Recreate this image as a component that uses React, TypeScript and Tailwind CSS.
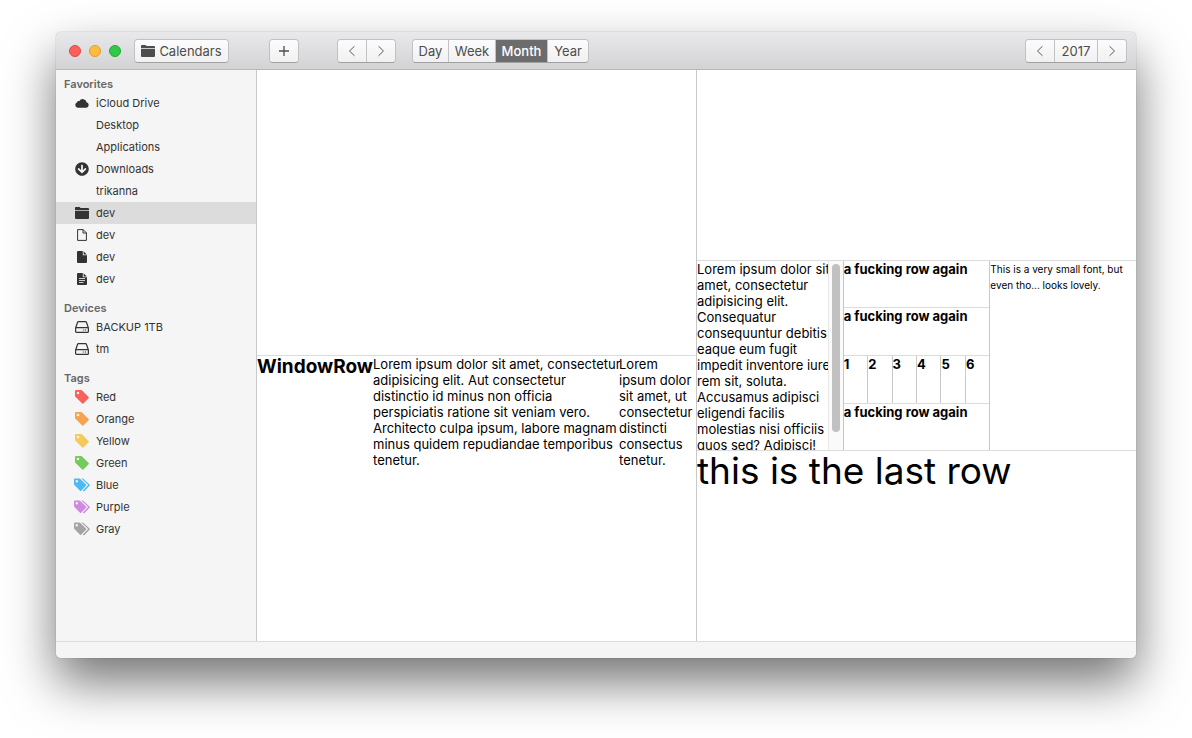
import type { ReactNode } from "react";
import { FaArrowCircleDown } from "react-icons/fa";

const chevron = "h-3 w-2 fill-none stroke-[#5a5a5a]";

function ChevronLeft() {
  return (
    <svg viewBox="0 0 8 12" className={chevron} aria-hidden="true">
      <path d="M6.5 1.2 1.5 6l5 4.800" />
    </svg>
  );
}

function ChevronRight() {
  return (
    <svg viewBox="0 0 8 12" className={chevron} aria-hidden="true">
      <path d="M1.500 1.200 6.500 6l-5 4.800" />
    </svg>
  );
}

function FolderIcon() {
  return (
    <svg viewBox="0 0 14 12" className="h-3 w-[14px] fill-current" aria-hidden="true">
      <path d="M0 3V.8Q0 0 .8 0h3.400q.4 0 .7.300l.7.700H13q1 0 1 1v1z" />
      <path d="M0 3.700h14V11q0 1-1 1H1q-1 0-1-1z" />
    </svg>
  );
}

function CloudIcon() {
  return (
    <svg viewBox="0 0 14 10" className="h-[10px] w-[14px] fill-current" aria-hidden="true">
      <path d="M11.600 4.300A3.900 3.900 0 0 0 4.400 3 2.100 2.100 0 0 0 1.800 4.600 2.700 2.700 0 0 0 2.700 9.700h8.500a2.750 2.750 0 0 0 .4-5.400z" />
    </svg>
  );
}

function FileOutlineIcon() {
  return (
    <svg viewBox="0 0 10 12" className="h-3 w-[10px] fill-none stroke-current" aria-hidden="true">
      <path d="M.6.600h5.600l3.200 3.200v7.600H.6zM6 .6V4h3.400" />
    </svg>
  );
}

function FileIcon({ lines = false }: { lines?: boolean }) {
  return (
    <svg viewBox="0 0 10 12" className="h-3 w-[10px]" aria-hidden="true">
      <path className="fill-current" d="M1 0h4.800v4.200H10V11q0 1-1 1H1q-1 0-1-1V1q0-1 1-1z" />
      <path className="fill-current" d="M6.600.2 9.800 3.400H6.600z" />
      {lines && <path className="fill-none stroke-[#f5f5f5]" d="M2 5.500h6M2 7.500h6M2 9.500h4.500" strokeWidth=".8" />}
    </svg>
  );
}

function DriveIcon() {
  return (
    <svg viewBox="0 0 14 12" className="h-3 w-[14px] fill-none stroke-current" strokeWidth="1.200" aria-hidden="true">
      <path d="M.6 7 2.600 1.200Q2.800.6 3.500.600h7q.7 0 .9.600L13.400 7" />
      <rect x=".6" y="6.600" width="12.800" height="4.800" rx="1" />
      <path d="M7.800 9h1M9.800 9h1.400" />
    </svg>
  );
}

function TagIcon() {
  return (
    <svg viewBox="0 0 14 14" className="size-[14px] fill-current" aria-hidden="true">
      <path
        fillRule="evenodd"
        d="M1 0h5.200q.5 0 .9.400l6.500 6.600q.6.600 0 1.200l-5.200 5.300q-.6.600-1.200 0L.4 6.800Q0 6.400 0 5.900V1q0-1 1-1zM3 1.700a1.300 1.300 0 1 0 0 2.600 1.300 1.300 0 0 0 0-2.600z"
      />
    </svg>
  );
}

function TagsIcon() {
  return (
    <svg viewBox="0 0 16 14" className="h-[14px] w-4 fill-current" aria-hidden="true">
      <path
        fillRule="evenodd"
        d="M.9.500h4.600q.5 0 .9.400l5.600 5.700q.6.600 0 1.200l-4.800 4.900q-.6.600-1.200 0L.4 7Q0 6.600 0 6.100V1.400Q0 .5.9.500zM2.800 2a1.200 1.200 0 1 0 0 2.400 1.200 1.200 0 0 0 0-2.400z"
      />
      <path d="M7.400.500h1.200q.5 0 .9.400l6 5.700q.6.600 0 1.200l-5 5.100q-.6.600-1.300 0l-.3-.4 5-5.200q.3-.3 0-.6z" />
    </svg>
  );
}

type Item = { label: string; icon?: ReactNode; color?: string; selected?: boolean };

const sections: { title: string; items: Item[] }[] = [
  {
    title: "Favorites",
    items: [
      { label: "iCloud Drive", icon: <CloudIcon /> },
      { label: "Desktop" },
      { label: "Applications" },
      { label: "Downloads", icon: <FaArrowCircleDown className="size-[14px]" aria-hidden="true" /> },
      { label: "trikanna" },
      { label: "dev", icon: <FolderIcon />, selected: true },
      { label: "dev", icon: <FileOutlineIcon /> },
      { label: "dev", icon: <FileIcon /> },
      { label: "dev", icon: <FileIcon lines /> },
    ],
  },
  {
    title: "Devices",
    items: [
      { label: "BACKUP 1TB", icon: <DriveIcon /> },
      { label: "tm", icon: <DriveIcon /> },
    ],
  },
  {
    title: "Tags",
    items: [
      { label: "Red", icon: <TagIcon />, color: "text-[#fc605b]" },
      { label: "Orange", icon: <TagIcon />, color: "text-[#f8a34f]" },
      { label: "Yellow", icon: <TagIcon />, color: "text-[#f4ca59]" },
      { label: "Green", icon: <TagIcon />, color: "text-[#72cb5b]" },
      { label: "Blue", icon: <TagsIcon />, color: "text-[#4fb9f2]" },
      { label: "Purple", icon: <TagsIcon />, color: "text-[#cd8ae0]" },
      { label: "Gray", icon: <TagsIcon />, color: "text-[#a4a4a6]" },
    ],
  },
];

function ButtonGroup({ children, label, className = "" }: { children: ReactNode; label: string; className?: string }) {
  return (
    <div
      role="group"
      aria-label={label}
      className={`flex h-6 divide-x divide-[#c2c2c2] overflow-hidden rounded border border-[#c2c0c2] border-b-[#a19fa1] ${className}`}
    >
      {children}
    </div>
  );
}

function ToolButton({
  children,
  label,
  active = false,
  width,
}: {
  children: ReactNode;
  label?: string;
  active?: boolean;
  width: string;
}) {
  const look = active ? "bg-[#6d6c6d] text-white font-medium" : "bg-linear-to-b from-[#fcfcfc] to-[#f1f1f1] text-[#4d4d4d]";
  return (
    <button
      type="button"
      aria-label={label}
      aria-pressed={active || undefined}
      className={`flex items-center justify-center gap-1 whitespace-nowrap text-[13px] leading-[22px] ${look} ${width}`}
    >
      {children}
    </button>
  );
}

function TitleBar() {
  return (
    <header className="flex h-[38px] shrink-0 items-center border-b border-[#b8b8b8] bg-linear-to-b from-[#e9e8ea] to-[#d3d2d5] pr-[9px] pl-[13px]">
      <div className="flex gap-2">
        <button type="button" aria-label="Close" className="size-3 rounded-full border border-[#e2463f] bg-[#fc605b]" />
        <button type="button" aria-label="Minimize" className="size-3 rounded-full border border-[#dfa023] bg-[#fdbc40]" />
        <button type="button" aria-label="Zoom" className="size-3 rounded-full border border-[#1dac2b] bg-[#34c84a]" />
      </div>
      <ButtonGroup label="Sources" className="ml-[13px]">
        <ToolButton width="w-[93px]">
          <FolderIcon />
          Calendars
        </ToolButton>
      </ButtonGroup>
      <ButtonGroup label="Create" className="ml-10">
        <ToolButton label="Add" width="w-7">
          <svg viewBox="0 0 10 10" className="size-[10px] stroke-[#4d4d4d]" aria-hidden="true">
            <path d="M5 0v10M0 5h10" strokeWidth="1.300" />
          </svg>
        </ToolButton>
      </ButtonGroup>
      <ButtonGroup label="History" className="ml-[38px]">
        <ToolButton label="Back" width="w-[29px]">
          <ChevronLeft />
        </ToolButton>
        <ToolButton label="Forward" width="w-7">
          <ChevronRight />
        </ToolButton>
      </ButtonGroup>
      <ButtonGroup label="View" className="ml-4">
        <ToolButton width="w-9">Day</ToolButton>
        <ToolButton width="w-[47px]">Week</ToolButton>
        <ToolButton width="w-[52px]" active>
          Month
        </ToolButton>
        <ToolButton width="w-10">Year</ToolButton>
      </ButtonGroup>
      <ButtonGroup label="Year" className="ml-auto">
        <ToolButton label="Previous year" width="w-[29px]">
          <ChevronLeft />
        </ToolButton>
        <ToolButton width="w-[43px]">2017</ToolButton>
        <ToolButton label="Next year" width="w-7">
          <ChevronRight />
        </ToolButton>
      </ButtonGroup>
    </header>
  );
}

function Sidebar() {
  return (
    <nav className="flex w-[201px] shrink-0 flex-col gap-[10px] border-r border-[#c8c8c8] bg-[#f5f5f5] pt-[6px] text-[11px] text-[#333]">
      {sections.map((section) => (
        <section key={section.title}>
          <h2 className="px-2 leading-4 font-semibold text-[#666]">{section.title}</h2>
          <ul>
            {section.items.map((item, index) => (
              <li key={index}>
                <a href="#" className={`flex h-[22px] items-center pl-4 leading-[22px] ${item.selected ? "bg-[#dcdcdc]" : ""}`}>
                  <span className={`mr-[5px] flex w-[19px] items-center justify-center ${item.color ?? ""}`}>{item.icon}</span>
                  {item.label}
                </a>
              </li>
            ))}
          </ul>
        </section>
      ))}
    </nav>
  );
}

function LeftPane() {
  return (
    <div className="flex min-w-0 flex-1 flex-col divide-y divide-[#dcdcdc] border-r border-[#c8c8c8]">
      <div className="min-h-0 flex-1" />
      <div className="flex min-h-0 flex-1">
        <h1 className="w-[116px] shrink-0 text-[19px] leading-[22px] font-bold">WindowRow</h1>
        <p className="w-[246px] shrink-0 whitespace-pre">
          {`Lorem ipsum dolor sit amet, consectetur
adipisicing elit. Aut consectetur
distinctio id minus non officia
perspiciatis ratione sit veniam vero.
Architecto culpa ipsum, labore magnam
minus quidem repudiandae temporibus
tenetur.`}
        </p>
        <p className="min-w-0 flex-1">Lorem ipsum dolor sit amet, ut consectetur distincti consectus tenetur.</p>
      </div>
    </div>
  );
}

function RightPane() {
  return (
    <div className="flex min-w-0 flex-1 flex-col divide-y divide-[#dcdcdc]">
      <div className="min-h-0 flex-1" />
      <div className="flex min-h-0 flex-1 divide-x divide-[#c8c8c8]">
        <div className="flex min-w-0 flex-1 overflow-hidden">
          <p className="min-w-0 flex-1 whitespace-pre">
            {`Lorem ipsum dolor sit
amet, consectetur
adipisicing elit.
Consequatur
consequuntur debitis
eaque eum fugit
impedit inventore iure
rem sit, soluta.
Accusamus adipisci
eligendi facilis
molestias nisi officiis
quos sed? Adipisci!`}
          </p>
          <div className="w-[15px] shrink-0 border-l border-[#e8e8e8] bg-[#fafafa] px-[3px] pt-[3px]" aria-hidden="true">
            <div className="h-[168px] w-2 rounded-full bg-[#c1c1c1]" />
          </div>
        </div>
        <div className="flex min-w-0 flex-1 flex-col divide-y divide-[#dcdcdc] font-bold">
          <div className="min-h-0 flex-1">a fucking row again</div>
          <div className="min-h-0 flex-1">a fucking row again</div>
          <div className="flex min-h-0 flex-1 divide-x divide-[#c8c8c8]">
            {[1, 2, 3, 4, 5, 6].map((n) => (
              <div key={n} className="min-w-0 flex-1">
                {n}
              </div>
            ))}
          </div>
          <div className="min-h-0 flex-1">a fucking row again</div>
        </div>
        <p className="min-w-0 flex-1 text-[10px] leading-4">This is a very small font, but even tho... looks lovely.</p>
      </div>
      <div className="min-h-0 flex-1 text-[37px] leading-10">this is the last row</div>
    </div>
  );
}

export default function App() {
  return (
    <div className="flex h-screen flex-col overflow-hidden bg-white px-14 pt-8 pb-20 font-['Inter',sans-serif]">
      <div className="flex min-h-0 flex-1 flex-col overflow-hidden rounded-[5px] shadow-[0_0_1px_rgba(0,0,0,0.5),0_24px_50px_rgba(0,0,0,0.55)]">
        <TitleBar />
        <div className="flex min-h-0 flex-1">
          <Sidebar />
          <main className="flex min-w-0 flex-1 bg-white text-[13px] leading-4 text-black">
            <LeftPane />
            <RightPane />
          </main>
        </div>
        <footer className="h-[17px] shrink-0 border-t border-[#dcdcdc] bg-[#f5f5f5]" />
      </div>
    </div>
  );
}
